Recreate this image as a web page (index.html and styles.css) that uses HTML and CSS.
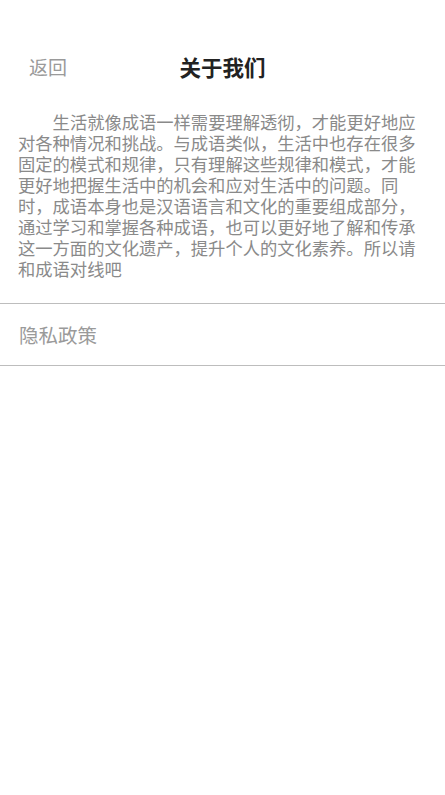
FILE: index.html
```html
<!DOCTYPE html>
<html lang="zh-CN">
  <head>
    <meta charset="utf-8" />
    <title>关于我们</title>
    <link rel="stylesheet" href="styles.css">
  </head>
  <body>
    <div id="wrap">
      <div id="header">
        <a href="#" class="back">返回</a>
        <h1 class="title">关于我们</h1>
        <span></span>
      </div>
      <div id="main">
        <p class="intro">生活就像成语一样需要理解透彻，才能更好地应对各种情况和挑战。与成语类似，生活中也存在很多固定的模式和规律，只有理解这些规律和模式，才能更好地把握生活中的机会和应对生活中的问题。同时，成语本身也是汉语语言和文化的重要组成部分，通过学习和掌握各种成语，也可以更好地了解和传承这一方面的文化遗产，提升个人的文化素养。所以请和成语对线吧</p>
      </div>
      <a href="#" class="row">隐私政策</a>
    </div>
  </body>
</html>
```

FILE: styles.css
```css
* {
  margin: 0;
  padding: 0;
  box-sizing: border-box;
}
body {
  background: #fff;
  font-family: "Noto Sans CJK SC", "Liberation Sans", sans-serif;
}
a {
  text-decoration: none;
}
#header {
  /* 返回 + 标题 */
  display: grid;
  grid-template-columns: 1fr auto 1fr;
  align-items: center;
  height: 56px;
  margin-top: 38px;
  padding: 0 29px;
}
.back {
  font-size: 19px;
  color: #9a9a9a;
  justify-self: start;
}
.title {
  font-size: 21.5px;
  font-weight: bold;
  color: #222;
}
#main {
  padding: 17px 18px 24px;
  border-bottom: 1.5px solid #bdbdbd;
}
.intro {
  /* 关于我们 正文 */
  font-size: 17.3px;
  line-height: 21px;
  text-indent: 2em;
  color: #8a8a8a;
}
.row {
  /* 隐私政策 */
  display: flex;
  align-items: center;
  height: 62px;
  padding-left: 19px;
  font-size: 19.5px;
  color: #9a9a9a;
  border-bottom: 1.5px solid #bdbdbd;
}
```
